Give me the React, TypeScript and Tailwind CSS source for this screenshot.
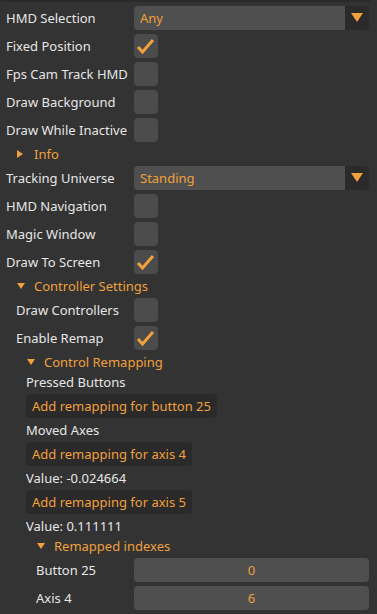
import React from 'react';

const ORANGE = 'text-[#f0a03c]';

function Check({ on }: { on?: boolean }) {
  return (
    <div className="w-6 h-6 rounded-[4px] bg-[#4b4b4b] flex items-center justify-center">
      {on && (
        <svg width="24" height="24" viewBox="0 0 24 24">
          <polyline points="4,13 8.5,18 19,6" fill="none" stroke="#f0a03c" strokeWidth="3" strokeLinecap="butt" strokeLinejoin="miter" />
        </svg>
      )}
    </div>
  );
}

function Combo({ value }: { value: string }) {
  return (
    <div className="flex-1 h-6 flex rounded-[4px] overflow-hidden">
      <div className={`flex-1 bg-[#4f4f4f] flex items-center pl-[6px] ${ORANGE}`}>{value}</div>
      <div className="w-6 bg-[#2a2a2a] flex items-center justify-center">
        <svg width="12" height="10" viewBox="0 0 12 10">
          <polygon points="0,0 12,0 6,9" fill="#f0a03c" />
        </svg>
      </div>
    </div>
  );
}

function Row({ label, indent = 0, children }: { label: string; indent?: number; children: React.ReactNode }) {
  return (
    <div className="flex items-center h-6">
      <div className="w-[128px] shrink-0 whitespace-nowrap" style={{ paddingLeft: indent }}>
        {label}
      </div>
      {children}
    </div>
  );
}

function Tree({ label, indent = 0, open }: { label: string; indent?: number; open?: boolean }) {
  return (
    <div className={`flex items-center h-4 ${ORANGE}`} style={{ paddingLeft: indent }}>
      <div className="w-[28px] shrink-0 flex items-center pl-[11px]">
        {open ? (
          <svg width="8" height="6" viewBox="0 0 8 6">
            <polygon points="0,0 8,0 4,6" fill="#f0a03c" />
          </svg>
        ) : (
          <svg width="6" height="8" viewBox="0 0 6 8">
            <polygon points="0,0 6,4 0,8" fill="#f0a03c" />
          </svg>
        )}
      </div>
      <span>{label}</span>
    </div>
  );
}

function Text({ children, indent = 0 }: { children: React.ReactNode; indent?: number }) {
  return (
    <div className="h-4 flex items-center whitespace-nowrap" style={{ paddingLeft: indent }}>
      {children}
    </div>
  );
}

function Btn({ children, indent = 0 }: { children: React.ReactNode; indent?: number }) {
  return (
    <div className="h-6 flex" style={{ paddingLeft: indent }}>
      <div className={`h-6 px-[6px] rounded-[4px] bg-[#2a2a2a] flex items-center whitespace-nowrap ${ORANGE}`}>{children}</div>
    </div>
  );
}

function NumField({ value }: { value: string }) {
  return (
    <div className={`flex-1 h-6 rounded-[4px] bg-[#4f4f4f] flex items-center justify-center ${ORANGE}`}>{value}</div>
  );
}

export default function App() {
  return (
    <div
      className="w-[377px] h-[614px] bg-[#333333] text-[#e6e6e6] text-[13px] leading-4 overflow-hidden"
      style={{ fontFamily: '"Noto Sans", "Open Sans", sans-serif' }}
    >
      <div className="h-[2px] w-[370px] bg-[#2a2a2a] rounded-b-[4px]" />
      <div className="flex flex-col gap-1 pl-[6px] pr-[8px] pt-1">
        <Row label="HMD Selection"><Combo value="Any" /></Row>
        <Row label="Fixed Position"><Check on /></Row>
        <Row label="Fps Cam Track HMD"><Check /></Row>
        <Row label="Draw Background"><Check /></Row>
        <Row label="Draw While Inactive"><Check /></Row>
        <Tree label="Info" />
        <Row label="Tracking Universe"><Combo value="Standing" /></Row>
        <Row label="HMD Navigation"><Check /></Row>
        <Row label="Magic Window"><Check /></Row>
        <Row label="Draw To Screen"><Check on /></Row>
        <Tree label="Controller Settings" open />
        <Row label="Draw Controllers" indent={10}><Check /></Row>
        <Row label="Enable Remap" indent={10}><Check on /></Row>
        <Tree label="Control Remapping" indent={10} open />
        <Text indent={20}>Pressed Buttons</Text>
        <Btn indent={20}>Add remapping for button 25</Btn>
        <Text indent={20}>Moved Axes</Text>
        <Btn indent={20}>Add remapping for axis 4</Btn>
        <Text indent={20}>Value: -0.024664</Text>
        <Btn indent={20}>Add remapping for axis 5</Btn>
        <Text indent={20}>Value: 0.111111</Text>
        <Tree label="Remapped indexes" indent={20} open />
        <Row label="Button 25" indent={30}><NumField value="0" /></Row>
        <Row label="Axis 4" indent={30}><NumField value="6" /></Row>
      </div>
    </div>
  );
}
